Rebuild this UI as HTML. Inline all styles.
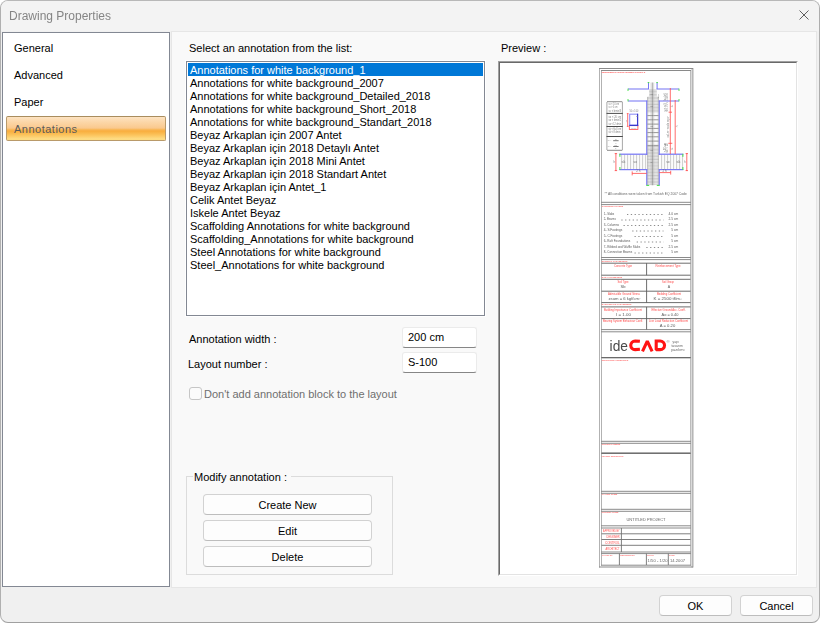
<!DOCTYPE html>
<html>
<head>
<meta charset="utf-8">
<title>Drawing Properties</title>
<style>
html,body{margin:0;padding:0;background:#fff;}
body{width:820px;height:623px;overflow:hidden;position:relative;font-family:"Liberation Sans",sans-serif;font-size:11px;color:#000;}
#win{position:absolute;left:0;top:0;width:818px;height:621px;border:1px solid;border-color:#b8b8b8 #adadad #a0a0a0 #b0b0b0;border-radius:8px;background:#f0f0f0;overflow:hidden;}
#title{position:absolute;left:0;top:0;width:818px;height:30px;background:#f3f3f3;}
#title span{will-change:transform;position:absolute;left:8px;top:8px;font-size:12px;line-height:14px;color:#858585;white-space:nowrap;letter-spacing:0.0px;}
#close{position:absolute;left:797px;top:8px;width:12px;height:12px;}
.abs{position:absolute;white-space:nowrap;line-height:13px;}
#side{position:absolute;left:1px;top:31px;width:166px;height:553px;border:1px solid #838893;background:#fff;}
.nav{position:absolute;left:11px;font-size:11px;line-height:14px;color:#000;white-space:nowrap;}
#sel{position:absolute;left:3px;top:83px;width:158px;height:23px;border:1px solid #b99a6a;border-top-color:#a98d5e;border-radius:2px;
 background:linear-gradient(to bottom,#fde3c2 0px,#fcd7a8 5px,#fac98e 11px,#f9b95c 12.5px,#f9ad3e 14px,#fab84c 16px,#fcca66 19px,#fedd86 22px,#fdd97c 23px);}
#panel{position:absolute;left:170px;top:30px;width:644px;height:555px;border:1px solid #e6e6e6;background:#f9f9f9;}
#list{position:absolute;left:185px;top:60px;width:297px;height:253px;border:1px solid #838893;background:#fff;box-shadow:0 0 0 1px #fff;}
.li{position:absolute;left:1px;width:295px;height:13px;line-height:15px;padding-left:2px;box-sizing:border-box;white-space:nowrap;}
.li.s{background:#0078d7;color:#fff;}
.inp{position:absolute;left:401px;width:73px;height:19px;border:1px solid #ebebeb;border-bottom:1px solid #868686;border-radius:3px;background:#fff;}
.inp span{position:absolute;left:5px;top:3px;line-height:13px;}
#chk{position:absolute;left:188px;top:386px;width:11px;height:11px;border:1px solid #c6c6c6;border-radius:3px;background:#fbfbfb;}
#grp{position:absolute;left:185px;top:475px;width:205px;height:97px;border:1px solid #dcdcdc;}
#grp b{position:absolute;left:6px;top:-6px;padding:0 4px 0 1px;background:#f9f9f9;font-weight:normal;line-height:13px;white-space:nowrap;}
.btn{position:absolute;height:19px;border:1px solid #d2d2d2;border-bottom-color:#bdbdbd;border-radius:4px;background:#fdfdfd;text-align:center;line-height:21px;}
#prev{position:absolute;left:497px;top:60px;width:296px;height:511px;border:2px solid;border-color:#a0a0a0 #fff #fff #a0a0a0;background:#fff;}
#prev i{position:absolute;left:-1px;top:-1px;width:296px;height:511px;border:1px solid;border-color:#696969 #e3e3e3 #e3e3e3 #696969;}
#dwg{position:absolute;left:499px;top:62px;width:296px;height:511px;will-change:transform;}
</style>
</head>
<body>
<div id="win">
 <div id="title"><span>Drawing Properties</span>
  <svg id="close" viewBox="0 0 12 12"><path d="M1.5 1.5 L10.5 10.5 M10.5 1.5 L1.5 10.5" stroke="#5e5e5e" stroke-width="1" fill="none"/></svg>
 </div>

 <div id="side">
  <div class="nav" style="top:8px">General</div>
  <div class="nav" style="top:35px">Advanced</div>
  <div class="nav" style="top:62px">Paper</div>
  <div id="sel"></div>
  <div class="nav" style="top:89px;color:#5a5a5a;letter-spacing:0.5px">Annotations</div>
 </div>

 <div id="panel"></div>

 <div class="abs" style="left:188px;top:41px">Select an annotation from the list:</div>
 <div id="list">
  <div class="li s" style="top:1px">Annotations for white background_1</div>
  <div class="li" style="top:14px">Annotations for white background_2007</div>
  <div class="li" style="top:27px">Annotations for white background_Detailed_2018</div>
  <div class="li" style="top:40px">Annotations for white background_Short_2018</div>
  <div class="li" style="top:53px">Annotations for white background_Standart_2018</div>
  <div class="li" style="top:66px">Beyaz Arkaplan için 2007 Antet</div>
  <div class="li" style="top:79px">Beyaz Arkaplan için 2018 Detaylı Antet</div>
  <div class="li" style="top:92px">Beyaz Arkaplan için 2018 Mini Antet</div>
  <div class="li" style="top:105px">Beyaz Arkaplan için 2018 Standart Antet</div>
  <div class="li" style="top:118px">Beyaz Arkaplan için Antet_1</div>
  <div class="li" style="top:131px">Celik Antet Beyaz</div>
  <div class="li" style="top:144px">Iskele Antet Beyaz</div>
  <div class="li" style="top:157px">Scaffolding Annotations for white background</div>
  <div class="li" style="top:170px">Scaffolding_Annotations for white background</div>
  <div class="li" style="top:183px">Steel Annotations for white background</div>
  <div class="li" style="top:196px">Steel_Annotations for white background</div>
 </div>

 <div class="abs" style="left:188px;top:332px">Annotation width :</div>
 <div class="abs" style="left:187px;top:357px">Layout number :</div>
 <div class="inp" style="top:326px"><span>200 cm</span></div>
 <div class="inp" style="top:351px"><span>S-100</span></div>

 <div id="chk"></div>
 <div class="abs" style="left:203px;top:387px;color:#6f6f6f">Don't add annotation block to the layout</div>

 <div id="grp"><b>Modify annotation :</b></div>
 <div class="btn" style="left:202px;top:493px;width:167px">Create New</div>
 <div class="btn" style="left:202px;top:519px;width:167px">Edit</div>
 <div class="btn" style="left:202px;top:545px;width:167px">Delete</div>

 <div class="abs" style="left:500px;top:41px">Preview :</div>
 <div id="prev"><i></i></div>
 <svg id="dwg" viewBox="500 63 296 511">
<g font-family="Liberation Sans, sans-serif" fill="none">
<path d="M599.5 68L599.5 567.5" stroke="#b2b2b2" stroke-width="1" />
<path d="M601.5 70L601.5 565.5" stroke="#b2b2b2" stroke-width="1" />
<path d="M690.5 70L690.5 565.5" stroke="#bcbcbc" stroke-width="1" />
<path d="M691.5 68L691.5 567.5" stroke="#dadada" stroke-width="1" />
<path d="M692.5 68L692.5 567.5" stroke="#b6b6b6" stroke-width="1" />
<path d="M693.5 68L693.5 567.5" stroke="#d6d6d6" stroke-width="1" />
<path d="M599 68.5L693 68.5" stroke="#8a8a8a" stroke-width="1" />
<path d="M599 567L693 567" stroke="#8a8a8a" stroke-width="1.2" />
<path d="M601 70.5L691 70.5" stroke="#8a8a8a" stroke-width="1" />
<path d="M601 202.3L691 202.3" stroke="#8a8a8a" stroke-width="1" />
<path d="M601 204.6L691 204.6" stroke="#8a8a8a" stroke-width="1" />
<path d="M601 257.5L691 257.5" stroke="#8a8a8a" stroke-width="1" />
<path d="M601 259.6L691 259.6" stroke="#8a8a8a" stroke-width="1" />
<path d="M601 329.6L691 329.6" stroke="#8a8a8a" stroke-width="1" />
<path d="M601 331.8L691 331.8" stroke="#8a8a8a" stroke-width="1" />
<path d="M601 357.6L691 357.6" stroke="#8a8a8a" stroke-width="1" />
<path d="M601 441.3L691 441.3" stroke="#8a8a8a" stroke-width="1" />
<path d="M601 443.3L691 443.3" stroke="#8a8a8a" stroke-width="1" />
<path d="M601 453.3L691 453.3" stroke="#8a8a8a" stroke-width="1" />
<path d="M601 491.3L691 491.3" stroke="#8a8a8a" stroke-width="1" />
<path d="M601 493.3L691 493.3" stroke="#8a8a8a" stroke-width="1" />
<path d="M601 509.3L691 509.3" stroke="#8a8a8a" stroke-width="1" />
<path d="M601 511.3L691 511.3" stroke="#8a8a8a" stroke-width="1" />
<path d="M601 525.8L691 525.8" stroke="#8a8a8a" stroke-width="1" />
<path d="M601 528L691 528" stroke="#8a8a8a" stroke-width="1" />
<path d="M601 552L691 552" stroke="#8a8a8a" stroke-width="1" />
<path d="M601 553.6L691 553.6" stroke="#8a8a8a" stroke-width="1" />
<path d="M601 565.2L691 565.2" stroke="#8a8a8a" stroke-width="1" />
<text transform="translate(601.8 73.4) scale(.25)" font-size="10.0" fill="#ff4a4a" textLength="174.0" lengthAdjust="spacingAndGlyphs" font-weight="bold">REQUIREMENTS ON REINFORCEMENT CONTROL &amp;</text>
<path d="M649 89 L656.8 89 L656.8 95 L658.8 97 L658.8 185.3 L647.2 185.3 L647.2 97 L649 95 Z" fill="#fbfbfb"/>
<rect x="620" y="154.6" width="63" height="14.8" fill="#fbfbfb"/>
<path d="M649 90.0L656.8 90.0" stroke="#a6a6a6" stroke-width="0.55" />
<path d="M649 91.4L656.8 91.4" stroke="#a6a6a6" stroke-width="0.55" />
<path d="M649 92.9L656.8 92.9" stroke="#a6a6a6" stroke-width="0.55" />
<path d="M649 94.4L656.8 94.4" stroke="#a6a6a6" stroke-width="0.55" />
<path d="M649 95.8L656.8 95.8" stroke="#a6a6a6" stroke-width="0.55" />
<path d="M647.2 97.3L658.8 97.3" stroke="#a6a6a6" stroke-width="0.55" />
<path d="M647.2 98.7L658.8 98.7" stroke="#a6a6a6" stroke-width="0.55" />
<path d="M647.2 100.2L658.8 100.2" stroke="#a6a6a6" stroke-width="0.55" />
<path d="M647.2 101.6L658.8 101.6" stroke="#a6a6a6" stroke-width="0.55" />
<path d="M647.2 103.1L658.8 103.1" stroke="#a6a6a6" stroke-width="0.55" />
<path d="M647.2 104.5L658.8 104.5" stroke="#a6a6a6" stroke-width="0.55" />
<path d="M647.2 106.0L658.8 106.0" stroke="#a6a6a6" stroke-width="0.55" />
<path d="M647.2 107.4L658.8 107.4" stroke="#a6a6a6" stroke-width="0.55" />
<path d="M647.2 108.9L658.8 108.9" stroke="#a6a6a6" stroke-width="0.55" />
<path d="M647.2 110.3L658.8 110.3" stroke="#a6a6a6" stroke-width="0.55" />
<path d="M647.2 111.8L658.8 111.8" stroke="#a6a6a6" stroke-width="0.55" />
<path d="M647.2 115.6L658.8 115.6" stroke="#747474" stroke-width="0.75" />
<path d="M647.2 119.8L658.8 119.8" stroke="#747474" stroke-width="0.75" />
<path d="M647.2 124.1L658.8 124.1" stroke="#747474" stroke-width="0.75" />
<path d="M647.2 128.4L658.8 128.4" stroke="#747474" stroke-width="0.75" />
<path d="M647.2 132.6L658.8 132.6" stroke="#747474" stroke-width="0.75" />
<path d="M647.2 136.8L658.8 136.8" stroke="#747474" stroke-width="0.75" />
<path d="M647.2 141.1L658.8 141.1" stroke="#747474" stroke-width="0.75" />
<path d="M647.2 145.4L658.8 145.4" stroke="#747474" stroke-width="0.75" />
<path d="M647.2 146.5L658.8 146.5" stroke="#a6a6a6" stroke-width="0.55" />
<path d="M647.2 148.0L658.8 148.0" stroke="#a6a6a6" stroke-width="0.55" />
<path d="M647.2 149.4L658.8 149.4" stroke="#a6a6a6" stroke-width="0.55" />
<path d="M647.2 150.8L658.8 150.8" stroke="#a6a6a6" stroke-width="0.55" />
<path d="M647.2 152.3L658.8 152.3" stroke="#a6a6a6" stroke-width="0.55" />
<path d="M647.2 153.7L658.8 153.7" stroke="#a6a6a6" stroke-width="0.55" />
<path d="M647.2 155.2L658.8 155.2" stroke="#a6a6a6" stroke-width="0.55" />
<path d="M647.2 156.6L658.8 156.6" stroke="#a6a6a6" stroke-width="0.55" />
<path d="M647.2 158.1L658.8 158.1" stroke="#a6a6a6" stroke-width="0.55" />
<path d="M647.2 159.5L658.8 159.5" stroke="#a6a6a6" stroke-width="0.55" />
<path d="M647.2 161.0L658.8 161.0" stroke="#a6a6a6" stroke-width="0.55" />
<path d="M647.2 162.4L658.8 162.4" stroke="#a6a6a6" stroke-width="0.55" />
<path d="M647.2 163.9L658.8 163.9" stroke="#a6a6a6" stroke-width="0.55" />
<path d="M647.2 165.3L658.8 165.3" stroke="#a6a6a6" stroke-width="0.55" />
<path d="M647.2 166.8L658.8 166.8" stroke="#a6a6a6" stroke-width="0.55" />
<path d="M647.2 168.2L658.8 168.2" stroke="#a6a6a6" stroke-width="0.55" />
<path d="M647.2 169.7L658.8 169.7" stroke="#a6a6a6" stroke-width="0.55" />
<path d="M647.2 171.1L658.8 171.1" stroke="#a6a6a6" stroke-width="0.55" />
<path d="M647.2 172.6L658.8 172.6" stroke="#a6a6a6" stroke-width="0.55" />
<path d="M647.2 174.0L658.8 174.0" stroke="#a6a6a6" stroke-width="0.55" />
<path d="M647.2 175.5L658.8 175.5" stroke="#a6a6a6" stroke-width="0.55" />
<path d="M647.2 176.9L658.8 176.9" stroke="#a6a6a6" stroke-width="0.55" />
<path d="M647.2 178.4L658.8 178.4" stroke="#a6a6a6" stroke-width="0.55" />
<path d="M647.2 179.8L658.8 179.8" stroke="#a6a6a6" stroke-width="0.55" />
<path d="M647.2 181.3L658.8 181.3" stroke="#a6a6a6" stroke-width="0.55" />
<path d="M647.2 182.7L658.8 182.7" stroke="#a6a6a6" stroke-width="0.55" />
<path d="M647.2 184.2L658.8 184.2" stroke="#a6a6a6" stroke-width="0.55" />
<path d="M651.1 82.5L651.1 185.3" stroke="#b0b0b0" stroke-width="0.5" />
<path d="M653.7 82.5L653.7 185.3" stroke="#b0b0b0" stroke-width="0.5" />
<path d="M652.4 82.5L652.4 185.3" stroke="#777" stroke-width="0.6" />
<path d="M647.7 97L647.7 185.3" stroke="#a0a0a0" stroke-width="0.6" />
<path d="M658.3 97L658.3 185.3" stroke="#a0a0a0" stroke-width="0.6" />
<path d="M621.6 154.6L621.6 169.4" stroke="#adadad" stroke-width="0.6" />
<path d="M624.6 154.6L624.6 169.4" stroke="#adadad" stroke-width="0.6" />
<path d="M627.6 154.6L627.6 169.4" stroke="#adadad" stroke-width="0.6" />
<path d="M630.6 154.6L630.6 169.4" stroke="#adadad" stroke-width="0.6" />
<path d="M633.6 154.6L633.6 169.4" stroke="#adadad" stroke-width="0.6" />
<path d="M636.6 154.6L636.6 169.4" stroke="#adadad" stroke-width="0.6" />
<path d="M639.6 154.6L639.6 169.4" stroke="#adadad" stroke-width="0.6" />
<path d="M642.6 154.6L642.6 169.4" stroke="#adadad" stroke-width="0.6" />
<path d="M645.6 154.6L645.6 169.4" stroke="#adadad" stroke-width="0.6" />
<path d="M661.6 154.6L661.6 169.4" stroke="#adadad" stroke-width="0.6" />
<path d="M664.6 154.6L664.6 169.4" stroke="#adadad" stroke-width="0.6" />
<path d="M667.6 154.6L667.6 169.4" stroke="#adadad" stroke-width="0.6" />
<path d="M670.6 154.6L670.6 169.4" stroke="#adadad" stroke-width="0.6" />
<path d="M673.6 154.6L673.6 169.4" stroke="#adadad" stroke-width="0.6" />
<path d="M676.6 154.6L676.6 169.4" stroke="#adadad" stroke-width="0.6" />
<path d="M679.6 154.6L679.6 169.4" stroke="#adadad" stroke-width="0.6" />
<path d="M682.6 154.6L682.6 169.4" stroke="#adadad" stroke-width="0.6" />
<path d="M648.5 82.5L648.5 89" stroke="#7878f4" stroke-width="1.05" />
<path d="M657.1 82.5L657.1 89" stroke="#7878f4" stroke-width="1.05" />
<path d="M628 89L649 89" stroke="#7878f4" stroke-width="1.05" />
<path d="M656.6 89L679 89" stroke="#7878f4" stroke-width="1.05" />
<path d="M628 101L647.3 101" stroke="#7878f4" stroke-width="1.05" />
<path d="M658.7 101L679 101" stroke="#7878f4" stroke-width="1.05" />
<path d="M646.7 100.4L646.7 154.9" stroke="#7878f4" stroke-width="1.05" />
<path d="M659.3 100.4L659.3 154.9" stroke="#7878f4" stroke-width="1.05" />
<path d="M619.4 154.2L647.3 154.2" stroke="#7878f4" stroke-width="1.25" />
<path d="M658.7 154.2L683.3 154.2" stroke="#7878f4" stroke-width="1.25" />
<path d="M619.4 169.6L647.3 169.6" stroke="#7878f4" stroke-width="1.25" />
<path d="M658.7 169.6L683.3 169.6" stroke="#7878f4" stroke-width="1.25" />
<path d="M646.7 169L646.7 185.5" stroke="#7878f4" stroke-width="1.05" />
<path d="M659.3 169L659.3 185.5" stroke="#7878f4" stroke-width="1.05" />
<path d="M647.7 82.6L649.3 82.6" stroke="#44e044" stroke-width="1.0" />
<path d="M656.3000000000001 82.6L657.9 82.6" stroke="#44e044" stroke-width="1.0" />
<path d="M628 88.6L628 91" stroke="#44e044" stroke-width="0.9" />
<path d="M628 99L628 101.4" stroke="#44e044" stroke-width="0.9" />
<path d="M679 88.6L679 91" stroke="#44e044" stroke-width="0.9" />
<path d="M679 99L679 101.4" stroke="#44e044" stroke-width="0.9" />
<path d="M619.9 153.8L619.9 156.8" stroke="#44e044" stroke-width="1.0" />
<path d="M619.9 167L619.9 170" stroke="#44e044" stroke-width="1.0" />
<path d="M682.9 153.8L682.9 156.8" stroke="#44e044" stroke-width="1.0" />
<path d="M682.9 167L682.9 170" stroke="#44e044" stroke-width="1.0" />
<path d="M646.4 185.4L649.2 185.4" stroke="#44e044" stroke-width="1.0" />
<path d="M656.8 185.4L659.6 185.4" stroke="#44e044" stroke-width="1.0" />
<path d="M670.3 88L670.3 154" stroke="#ff4848" stroke-width="0.8" />
<path d="M675.2 100L675.2 154" stroke="#ff4848" stroke-width="0.8" />
<path d="M668.6 112.2L672 112.2" stroke="#ff4848" stroke-width="0.8" />
<path d="M668.3 143.3L672.3 143.3" stroke="#ff4848" stroke-width="0.8" />
<path d="M615.9 153.2L615.9 171" stroke="#ff4848" stroke-width="0.8" />
<path d="M686.8 153.2L686.8 171" stroke="#ff4848" stroke-width="0.8" />
<path d="M614.6999999999999 153.6L617.1 153.6" stroke="#ff4848" stroke-width="0.8" />
<path d="M614.6999999999999 170.6L617.1 170.6" stroke="#ff4848" stroke-width="0.8" />
<path d="M685.5999999999999 153.6L688.0 153.6" stroke="#ff4848" stroke-width="0.8" />
<path d="M685.5999999999999 170.6L688.0 170.6" stroke="#ff4848" stroke-width="0.8" />
<path d="M632.2 173.4L646.6 173.4" stroke="#ff4848" stroke-width="0.8" />
<path d="M632.2 171.4L632.2 175.4" stroke="#ff4848" stroke-width="0.8" />
<path d="M659.3 172.6L670.7 172.6" stroke="#ff4848" stroke-width="0.8" />
<path d="M670.7 170.8L670.7 174.6" stroke="#ff4848" stroke-width="0.8" />
<text transform="translate(668.2 100.5) rotate(-90) scale(.25)" font-size="10.4" fill="#707070" textLength="28" lengthAdjust="spacingAndGlyphs">≥ 50 cm</text>
<text transform="translate(665.8 100.5) rotate(-90) scale(.25)" font-size="10.4" fill="#707070" textLength="28" lengthAdjust="spacingAndGlyphs">lo &gt; ln/6</text>
<text transform="translate(668.2 111.5) rotate(-90) scale(.25)" font-size="10.4" fill="#707070" textLength="36" lengthAdjust="spacingAndGlyphs">sk &lt; 10 cm</text>
<text transform="translate(666 111.5) rotate(-90) scale(.25)" font-size="10.4" fill="#707070" textLength="32" lengthAdjust="spacingAndGlyphs">sk &lt; bk/3</text>
<text transform="translate(669 137.5) rotate(-90) scale(.25)" font-size="10.4" fill="#707070" textLength="86.0" lengthAdjust="spacingAndGlyphs">column middle region</text>
<text transform="translate(668.2 152.5) rotate(-90) scale(.25)" font-size="10.4" fill="#707070" textLength="38.0" lengthAdjust="spacingAndGlyphs">sk &lt; 10</text>
<text transform="translate(665.8 152.5) rotate(-90) scale(.25)" font-size="10.4" fill="#707070" textLength="38.0" lengthAdjust="spacingAndGlyphs">&gt; 50 cm</text>
<text transform="translate(672.3 107.5) rotate(-60) scale(.25)" font-size="10.4" fill="#707070">lo</text>
<text transform="translate(677.2 127.5) rotate(-60) scale(.25)" font-size="10.4" fill="#707070">ln</text>
<text transform="translate(672.2 150) rotate(-60) scale(.25)" font-size="10.4" fill="#707070">lo</text>
<text transform="translate(613.4 162.8) scale(.25)" font-size="10.4" fill="#707070">h</text>
<text transform="translate(684.3 162.8) scale(.25)" font-size="10.4" fill="#707070">h</text>
<text transform="translate(636.3 172.4) scale(.25)" font-size="10.4" fill="#707070" textLength="16.8" lengthAdjust="spacingAndGlyphs">2 h</text>
<text transform="translate(662.6 171.6) scale(.25)" font-size="10.4" fill="#707070" textLength="16.8" lengthAdjust="spacingAndGlyphs">2 h</text>
<text transform="translate(650.6 95.2) scale(.25)" font-size="9.6" fill="#707070">sc</text>
<text transform="translate(650.6 106.8) scale(.25)" font-size="9.6" fill="#707070">sc</text>
<text transform="translate(650.6 127) scale(.25)" font-size="9.6" fill="#707070">so</text>
<text transform="translate(650.6 151.2) scale(.25)" font-size="9.6" fill="#707070">sc</text>
<text transform="translate(650.6 162.8) scale(.25)" font-size="9.6" fill="#707070">sj</text>
<text transform="translate(621.6 163) scale(.25)" font-size="10.4" fill="#707070" textLength="15.2" lengthAdjust="spacingAndGlyphs">sk</text>
<text transform="translate(633.6 163) scale(.25)" font-size="10.4" fill="#707070" textLength="13.6" lengthAdjust="spacingAndGlyphs">so</text>
<text transform="translate(666.2 163) scale(.25)" font-size="10.4" fill="#707070" textLength="13.6" lengthAdjust="spacingAndGlyphs">so</text>
<text transform="translate(676.6 163) scale(.25)" font-size="10.4" fill="#707070" textLength="15.2" lengthAdjust="spacingAndGlyphs">sk</text>
<text transform="translate(658.2 96.5) scale(.25)" font-size="12" fill="#707070">)</text>
<path d="M606.9 102L606.9 150" stroke="#a8a8a8" stroke-width="1" />
<path d="M622.4 102L622.4 150" stroke="#a8a8a8" stroke-width="1" />
<path d="M607 101.7L622.3 101.7" stroke="#8a8a8a" stroke-width="1" />
<path d="M607 150.3L622.3 150.3" stroke="#8a8a8a" stroke-width="1" />
<path d="M606.5 113.4L622.8 113.4" stroke="#4a4a4a" stroke-width="1" />
<path d="M606.5 126.5L622.8 126.5" stroke="#4a4a4a" stroke-width="1" />
<path d="M606.5 136.5L622.8 136.5" stroke="#4a4a4a" stroke-width="1" />
<text transform="translate(608.6 105.4) scale(.25)" font-size="11.6" fill="#7c7c7c" textLength="42.0" lengthAdjust="spacingAndGlyphs">sc &lt; 10 cm</text>
<text transform="translate(608.6 108.4) scale(.25)" font-size="11.6" fill="#7c7c7c" textLength="36" lengthAdjust="spacingAndGlyphs">sc &gt; 5 cm</text>
<text transform="translate(608.6 112) scale(.25)" font-size="11.6" fill="#7c7c7c" textLength="50.0" lengthAdjust="spacingAndGlyphs">sc &lt; bmin/3</text>
<text transform="translate(608.6 117.8) scale(.25)" font-size="11.6" fill="#7c7c7c" textLength="50.0" lengthAdjust="spacingAndGlyphs">so &lt; 20 cm</text>
<text transform="translate(608.6 121.4) scale(.25)" font-size="11.6" fill="#7c7c7c" textLength="50.0" lengthAdjust="spacingAndGlyphs">so &lt; bmin/2</text>
<text transform="translate(608.6 125.1) scale(.25)" font-size="11.6" fill="#7c7c7c" textLength="50.0" lengthAdjust="spacingAndGlyphs">so &lt; 12 dmin</text>
<text transform="translate(608.6 129.9) scale(.25)" font-size="11.6" fill="#7c7c7c" textLength="50.0" lengthAdjust="spacingAndGlyphs">sk &lt; hk/4 cm</text>
<text transform="translate(608.6 133.2) scale(.25)" font-size="11.6" fill="#7c7c7c" textLength="48" lengthAdjust="spacingAndGlyphs">sk &lt; 8 dmin</text>
<text transform="translate(607.8 141.4) scale(.25)" font-size="9.6" fill="#8a8a8a" textLength="14.4" lengthAdjust="spacingAndGlyphs">lo &gt;</text>
<text transform="translate(607.8 147.2) scale(.25)" font-size="9.6" fill="#8a8a8a" textLength="14.4" lengthAdjust="spacingAndGlyphs">lo &gt;</text>
<path d="M613.2 140.7L618.6 140.7" stroke="#555" stroke-width="0.8" />
<path d="M613.2 146.5L618.6 146.5" stroke="#555" stroke-width="0.8" />
<text transform="translate(615 139.8) scale(.25)" font-size="8.8" fill="#8a8a8a">ln</text>
<text transform="translate(615.2 143.6) scale(.25)" font-size="8.8" fill="#8a8a8a">6</text>
<text transform="translate(614.6 145.6) scale(.25)" font-size="8.8" fill="#8a8a8a">50</text>
<text transform="translate(615.2 149.3) scale(.25)" font-size="8.8" fill="#8a8a8a">1</text>
<text transform="translate(629.4 112.2) scale(.25)" font-size="10.4" fill="#8a8a8a" textLength="35.2" lengthAdjust="spacingAndGlyphs">50 x 100</text>
<rect x="629.3" y="125.6" width="8.6" height="3.8" stroke="#ff4848" stroke-width="0.8" fill="none"/>
<rect x="629.7" y="114.2" width="7.8" height="11.1" stroke="#9090f6" stroke-width="1.1" fill="none"/>
<path d="M637.6 113.8L637.6 125.9" stroke="#3a3acc" stroke-width="1.2" />
<path d="M629.4 125.4L638.2 125.4" stroke="#3a3acc" stroke-width="1.3" />
<path d="M627.7 113.4L627.7 126.6" stroke="#ff4848" stroke-width="0.8" />
<path d="M626.8 113.6L628.6 113.6" stroke="#ff4848" stroke-width="0.7" />
<path d="M626.8 126.4L628.6 126.4" stroke="#ff4848" stroke-width="0.7" />
<text transform="translate(626.9 122.6) rotate(-90) scale(.25)" font-size="9.6" fill="#8a8a8a">hk</text>
<text transform="translate(631.2 128.7) scale(.25)" font-size="9.6" fill="#999" textLength="20" lengthAdjust="spacingAndGlyphs">bmin</text>
<text transform="translate(636 116.6) scale(.25)" font-size="8" fill="#8a8a8a">so</text>
<text transform="translate(604.6 195.1) scale(.25)" font-size="12.4" fill="#666" textLength="328.8" lengthAdjust="spacingAndGlyphs">** All conditions were taken from Turkish EQ 2007 Code</text>
<text transform="translate(601.8 207.3) scale(.25)" font-size="9.6" fill="#ff6060" textLength="86.0" lengthAdjust="spacingAndGlyphs" font-weight="bold">CONCRETE COVERS</text>
<text transform="translate(603.8 214.6) scale(.25)" font-size="13.2" fill="#5a5a5a" textLength="42.0" lengthAdjust="spacingAndGlyphs">1- Slabs</text>
<path d="M627 214.5L663.5 214.5" stroke="#707070" stroke-width="0.8" stroke-dasharray="1.3 2.5"/>
<text transform="translate(678.3 214.6) scale(.25)" font-size="13.2" fill="#5a5a5a" text-anchor="end">4.0 cm</text>
<text transform="translate(603.8 220.1) scale(.25)" font-size="13.2" fill="#5a5a5a" textLength="48.0" lengthAdjust="spacingAndGlyphs">2- Beams</text>
<path d="M621.3 220.0L663.5 220.0" stroke="#707070" stroke-width="0.8" stroke-dasharray="1.3 2.5"/>
<text transform="translate(678.3 220.1) scale(.25)" font-size="13.2" fill="#5a5a5a" text-anchor="end">2.5 cm</text>
<text transform="translate(603.8 225.6) scale(.25)" font-size="13.2" fill="#5a5a5a" textLength="61.2" lengthAdjust="spacingAndGlyphs">3- Columns</text>
<path d="M623.5 225.5L663.5 225.5" stroke="#707070" stroke-width="0.8" stroke-dasharray="1.3 2.5"/>
<text transform="translate(678.3 225.6) scale(.25)" font-size="13.2" fill="#5a5a5a" text-anchor="end">2.5 cm</text>
<text transform="translate(603.8 231.1) scale(.25)" font-size="13.2" fill="#5a5a5a" textLength="73.6" lengthAdjust="spacingAndGlyphs">4- S.Footings</text>
<path d="M632.2 231.0L663.5 231.0" stroke="#707070" stroke-width="0.8" stroke-dasharray="1.3 2.5"/>
<text transform="translate(678.3 231.1) scale(.25)" font-size="13.2" fill="#5a5a5a" text-anchor="end">5 cm</text>
<text transform="translate(603.8 236.6) scale(.25)" font-size="13.2" fill="#5a5a5a" textLength="73.6" lengthAdjust="spacingAndGlyphs">5- C.Footings</text>
<path d="M634.5 236.5L663.5 236.5" stroke="#707070" stroke-width="0.8" stroke-dasharray="1.3 2.5"/>
<text transform="translate(678.3 236.6) scale(.25)" font-size="13.2" fill="#5a5a5a" text-anchor="end">5 cm</text>
<text transform="translate(603.8 242.1) scale(.25)" font-size="13.2" fill="#5a5a5a" textLength="106.0" lengthAdjust="spacingAndGlyphs">6- Raft Foundations</text>
<path d="M636.7 242.0L663.5 242.0" stroke="#707070" stroke-width="0.8" stroke-dasharray="1.3 2.5"/>
<text transform="translate(678.3 242.1) scale(.25)" font-size="13.2" fill="#5a5a5a" text-anchor="end">5 cm</text>
<text transform="translate(603.8 247.6) scale(.25)" font-size="13.2" fill="#5a5a5a" textLength="145.6" lengthAdjust="spacingAndGlyphs">7- Ribbed and Waffle Slabs</text>
<path d="M646.3 247.5L663.5 247.5" stroke="#707070" stroke-width="0.8" stroke-dasharray="1.3 2.5"/>
<text transform="translate(678.3 247.6) scale(.25)" font-size="13.2" fill="#5a5a5a" text-anchor="end">2.5 cm</text>
<text transform="translate(603.8 253.1) scale(.25)" font-size="13.2" fill="#5a5a5a" textLength="113.6" lengthAdjust="spacingAndGlyphs">8- Connection Beams</text>
<path d="M634.5 253.0L663.5 253.0" stroke="#707070" stroke-width="0.8" stroke-dasharray="1.3 2.5"/>
<text transform="translate(678.3 253.1) scale(.25)" font-size="13.2" fill="#5a5a5a" text-anchor="end">5 cm</text>
<text transform="translate(601.8 261.7) scale(.25)" font-size="9.6" fill="#ff6060" textLength="102.0" lengthAdjust="spacingAndGlyphs" font-weight="bold">MATERIAL PARAMETERS</text>
<path d="M601.5 263.2L690.5 263.2" stroke="#5c5c5c" stroke-width="0.9" />
<path d="M601.5 275.2L690.5 275.2" stroke="#5c5c5c" stroke-width="0.9" />
<path d="M601.5 279.3L690.5 279.3" stroke="#5c5c5c" stroke-width="0.9" />
<path d="M601.5 291.2L690.5 291.2" stroke="#5c5c5c" stroke-width="0.9" />
<path d="M601.5 302.6L690.5 302.6" stroke="#5c5c5c" stroke-width="0.9" />
<path d="M601.5 306.9L690.5 306.9" stroke="#5c5c5c" stroke-width="0.9" />
<path d="M601.5 318.6L690.5 318.6" stroke="#5c5c5c" stroke-width="0.9" />
<path d="M646.6 263.2L646.6 275.2" stroke="#5c5c5c" stroke-width="0.9" />
<path d="M646.6 279.3L646.6 302.6" stroke="#5c5c5c" stroke-width="0.9" />
<path d="M646.6 306.9L646.6 329.5" stroke="#5c5c5c" stroke-width="0.9" />
<text transform="translate(601.8 277.7) scale(.25)" font-size="9.6" fill="#ff6060" textLength="82.0" lengthAdjust="spacingAndGlyphs" font-weight="bold">SOIL PARAMETERS</text>
<text transform="translate(601.8 305.2) scale(.25)" font-size="9.6" fill="#ff6060" textLength="118.0" lengthAdjust="spacingAndGlyphs" font-weight="bold">EARTHQUAKE PARAMETERS</text>
<text transform="translate(623 267.1) scale(.25)" font-size="10.8" fill="#ff4848" text-anchor="middle" textLength="72" lengthAdjust="spacingAndGlyphs">Concrete Type</text>
<text transform="translate(668 267.4) scale(.25)" font-size="10.8" fill="#ff4848" text-anchor="middle" textLength="100" lengthAdjust="spacingAndGlyphs">Reinforcement Type</text>
<text transform="translate(623 282.9) scale(.25)" font-size="10.8" fill="#ff4848" text-anchor="middle" textLength="44" lengthAdjust="spacingAndGlyphs">Soil Type</text>
<text transform="translate(668 282.9) scale(.25)" font-size="10.8" fill="#ff4848" text-anchor="middle" textLength="48" lengthAdjust="spacingAndGlyphs">Soil Group</text>
<text transform="translate(623 287.9) scale(.25)" font-size="12.8" fill="#5a5a5a" text-anchor="middle" textLength="20" lengthAdjust="spacingAndGlyphs">Sb</text>
<text transform="translate(669 287.9) scale(.25)" font-size="12.8" fill="#5a5a5a" text-anchor="middle" textLength="9.6" lengthAdjust="spacingAndGlyphs">A</text>
<text transform="translate(624 294.8) scale(.25)" font-size="10.8" fill="#ff4848" text-anchor="middle" textLength="128" lengthAdjust="spacingAndGlyphs">Admissible Ground Stress</text>
<text transform="translate(669 294.8) scale(.25)" font-size="10.8" fill="#ff4848" text-anchor="middle" textLength="96" lengthAdjust="spacingAndGlyphs">Bedding Coefficient</text>
<text transform="translate(624.5 299.9) scale(.25)" font-size="12.8" fill="#5a5a5a" text-anchor="middle" textLength="128" lengthAdjust="spacingAndGlyphs">zsum = 6 kgf/cm²</text>
<text transform="translate(667.5 299.9) scale(.25)" font-size="12.8" fill="#5a5a5a" text-anchor="middle" textLength="112" lengthAdjust="spacingAndGlyphs">K = 2500 tf/m³</text>
<text transform="translate(623 310.9) scale(.25)" font-size="10.8" fill="#ff4848" text-anchor="middle" textLength="152" lengthAdjust="spacingAndGlyphs">Building Importance Coefficient</text>
<text transform="translate(668.5 310.9) scale(.25)" font-size="10.8" fill="#ff4848" text-anchor="middle" textLength="136" lengthAdjust="spacingAndGlyphs">Effective Ground Acc. Coeff.</text>
<text transform="translate(623.5 315.7) scale(.25)" font-size="12.8" fill="#5a5a5a" text-anchor="middle" textLength="60" lengthAdjust="spacingAndGlyphs">I = 1.00</text>
<text transform="translate(670 315.7) scale(.25)" font-size="12.8" fill="#5a5a5a" text-anchor="middle" textLength="68" lengthAdjust="spacingAndGlyphs">Ao = 0.40</text>
<text transform="translate(623 322.3) scale(.25)" font-size="10.8" fill="#ff4848" text-anchor="middle" textLength="160" lengthAdjust="spacingAndGlyphs">Bearing System Behaviour Coeff.</text>
<text transform="translate(668.5 322.3) scale(.25)" font-size="10.8" fill="#ff4848" text-anchor="middle" textLength="156" lengthAdjust="spacingAndGlyphs">Live Load Reduction Coefficient</text>
<text transform="translate(667.5 326.9) scale(.25)" font-size="12.8" fill="#5a5a5a" text-anchor="middle" textLength="62.0" lengthAdjust="spacingAndGlyphs">A = 0.20</text>
<path d="M601.5 357.6L690.5 357.6" stroke="#6a6a6a" stroke-width="1.2" />
<text transform="translate(609.6 350.9) scale(.25)" font-size="57.6" fill="#4a4a4a" textLength="73.6" lengthAdjust="spacingAndGlyphs">ide</text>
<g fill="none" stroke="#ff1414" stroke-width="3.1" stroke-linejoin="bevel">
<path d="M639.9 341.3 L635.1 340.95 A4.35 4.35 0 0 0 635.1 349.65 L639.9 349.3"/>
<path d="M642.5 351.3 L647.3 341.2 L652.1 351.3"/>
<path d="M656.2 340.95 L656.2 349.65 L660.2 349.65 A4.35 4.35 0 0 0 660.2 340.95 L654.65 340.95"/>
</g>
<text transform="translate(666.4 343.3) scale(.25)" font-size="17.6" fill="#808080">®</text>
<text transform="translate(672.6 342.7) scale(.25)" font-size="12.8" fill="#666" textLength="24" lengthAdjust="spacingAndGlyphs">yapı</text>
<text transform="translate(671.4 346.9) scale(.25)" font-size="12.8" fill="#666" textLength="46.0" lengthAdjust="spacingAndGlyphs">tasarım</text>
<text transform="translate(671 351) scale(.25)" font-size="12.8" fill="#666" textLength="54.0" lengthAdjust="spacingAndGlyphs">yazılımı</text>
<text transform="translate(601.8 360.5) scale(.25)" font-size="9.6" fill="#ff6060" textLength="106.0" lengthAdjust="spacingAndGlyphs" font-weight="bold">REVISIONS / REMARKS</text>
<text transform="translate(601.8 445.3) scale(.25)" font-size="9.6" fill="#ff6060" textLength="74.0" lengthAdjust="spacingAndGlyphs" font-weight="bold">PROJECT OWNER</text>
<path d="M601.5 453.3L690.5 453.3" stroke="#707070" stroke-width="1.4" />
<text transform="translate(601.8 457.4) scale(.25)" font-size="9.6" fill="#ff6060" textLength="86.0" lengthAdjust="spacingAndGlyphs" font-weight="bold">PROJECT DESCRIPTION</text>
<text transform="translate(601.8 495.4) scale(.25)" font-size="9.6" fill="#ff6060" textLength="62.0" lengthAdjust="spacingAndGlyphs" font-weight="bold">LAYOUT NAME</text>
<text transform="translate(601.8 513) scale(.25)" font-size="9.6" fill="#ff6060" textLength="66.0" lengthAdjust="spacingAndGlyphs" font-weight="bold">PROJECT NAME</text>
<text transform="translate(646 521.2) scale(.25)" font-size="12.4" fill="#666" text-anchor="middle" textLength="156" lengthAdjust="spacingAndGlyphs">UNTITLED PROJECT</text>
<path d="M601.5 533.8L690.5 533.8" stroke="#707070" stroke-width="0.9" />
<path d="M601.5 539.5L690.5 539.5" stroke="#707070" stroke-width="0.9" />
<path d="M601.5 545.3L690.5 545.3" stroke="#707070" stroke-width="0.9" />
<path d="M621.4 528L621.4 552" stroke="#707070" stroke-width="0.9" />
<text transform="translate(619.6 532.3) scale(.25)" font-size="10.8" fill="#ff4848" text-anchor="end" textLength="66.0" lengthAdjust="spacingAndGlyphs">APPROVED BY</text>
<text transform="translate(619.6 538) scale(.25)" font-size="10.8" fill="#ff4848" text-anchor="end" textLength="52" lengthAdjust="spacingAndGlyphs">DESIGNER</text>
<text transform="translate(619.6 543.8) scale(.25)" font-size="10.8" fill="#ff4848" text-anchor="end" textLength="58.0" lengthAdjust="spacingAndGlyphs">CONTROL</text>
<text transform="translate(619.6 550.1) scale(.25)" font-size="10.8" fill="#ff4848" text-anchor="end" textLength="56" lengthAdjust="spacingAndGlyphs">ARCHITECT</text>
<path d="M619.4 553.6L619.4 565" stroke="#707070" stroke-width="0.9" />
<path d="M646.4 553.6L646.4 565" stroke="#707070" stroke-width="0.9" />
<path d="M668.3 553.6L668.3 565" stroke="#707070" stroke-width="0.9" />
<text transform="translate(601.9 556.2) scale(.25)" font-size="9.6" fill="#ff6060" textLength="42.0" lengthAdjust="spacingAndGlyphs" font-weight="bold">LAYOUT NO</text>
<text transform="translate(620.3 556.2) scale(.25)" font-size="9.6" fill="#ff6060" textLength="58.0" lengthAdjust="spacingAndGlyphs" font-weight="bold">REVISION NO</text>
<text transform="translate(647.2 556.2) scale(.25)" font-size="9.6" fill="#ff6060" textLength="26.0" lengthAdjust="spacingAndGlyphs" font-weight="bold">SCALE</text>
<text transform="translate(669.2 556.2) scale(.25)" font-size="9.6" fill="#ff6060" textLength="22.0" lengthAdjust="spacingAndGlyphs" font-weight="bold">DATE</text>
<text transform="translate(647.6 561.6) scale(.25)" font-size="12.4" fill="#666" textLength="80" lengthAdjust="spacingAndGlyphs">1/50 - 1/20</text>
<text transform="translate(670 561.6) scale(.25)" font-size="12.4" fill="#666" textLength="60" lengthAdjust="spacingAndGlyphs">14.2007</text>
</g>
</svg>

 <div class="btn" style="left:658px;top:594px;width:71px">OK</div>
 <div class="btn" style="left:739px;top:594px;width:71px">Cancel</div>
</div>
</body>
</html>
